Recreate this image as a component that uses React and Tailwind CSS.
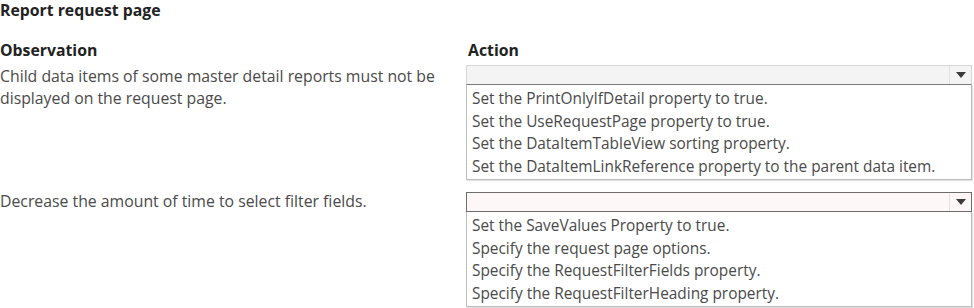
import { useState } from 'react';

const groups = [
  {
    observation: ['Child data items of some master detail reports must not be', 'displayed on the request page.'],
    options: [
      'Set the PrintOnlyIfDetail property to true.',
      'Set the UseRequestPage property to true.',
      'Set the DataItemTableView sorting property.',
      'Set the DataItemLinkReference property to the parent data item.',
    ],
    focused: false,
  },
  {
    observation: ['Decrease the amount of time to select filter fields.'],
    options: [
      'Set the SaveValues Property to true.',
      'Specify the request page options.',
      'Specify the RequestFilterFields property.',
      'Specify the RequestFilterHeading property.',
    ],
    focused: true,
  },
];

function Dropdown({ options, focused }) {
  const [value] = useState('');
  return (
    <div className="w-[506px]">
      <div
        className={
          focused
            ? 'h-[20px] flex items-center justify-between border border-[#6d6d6d] bg-[#fdf7f8]'
            : 'h-[20px] flex items-center justify-between border border-[#d6d6d6] border-b-[#7a7a7a] bg-[#f4f4f4]'
        }
      >
        <span className="pl-1">{value}</span>
        <span className="w-[22px] h-full flex items-center justify-center border-l border-[#e2e2e2]">
          <svg width="10" height="6" viewBox="0 0 10 6">
            <path d="M0 0h10L5 6z" fill="#3a3a3a" />
          </svg>
        </span>
      </div>
      <ul className="border border-[#bdbdbd] border-t-0 pt-[3px] pb-[1px] shadow-[1px_1px_1px_rgba(0,0,0,0.12)]">
        {options.map((o) => (
          <li key={o} className="pl-[5px] leading-[22.5px] text-[15.4px] text-[#4a4a4a] whitespace-nowrap">{o}</li>
        ))}
      </ul>
    </div>
  );
}

export default function App() {
  return (
    <div className="w-[974px] h-[308px] bg-white overflow-hidden text-[15.8px] text-[#4a4a4a]" style={{ fontFamily: '"Open Sans", sans-serif' }}>
      <h1 className="font-bold text-[#222] leading-[20px]">Report request page</h1>
      <div className="grid grid-cols-[466px_508px] mt-[20px]">
        <div className="font-bold text-[#222] leading-[20px]">Observation</div>
        <div className="font-bold text-[#222] leading-[20px] pl-[2px]">Action</div>

        {groups.map((g, i) => (
          <div key={i} className="contents">
            <div className={i === 0 ? 'pt-[5px] leading-[22px] whitespace-nowrap' : 'pt-[10px] leading-[22px] whitespace-nowrap'}>
              {g.observation.map((l) => (
                <div key={l}>{l}</div>
              ))}
            </div>
            <div className={i === 0 ? 'pt-[5px]' : 'pt-[12px]'}>
              <Dropdown options={g.options} focused={g.focused} />
            </div>
          </div>
        ))}
      </div>
    </div>
  );
}
